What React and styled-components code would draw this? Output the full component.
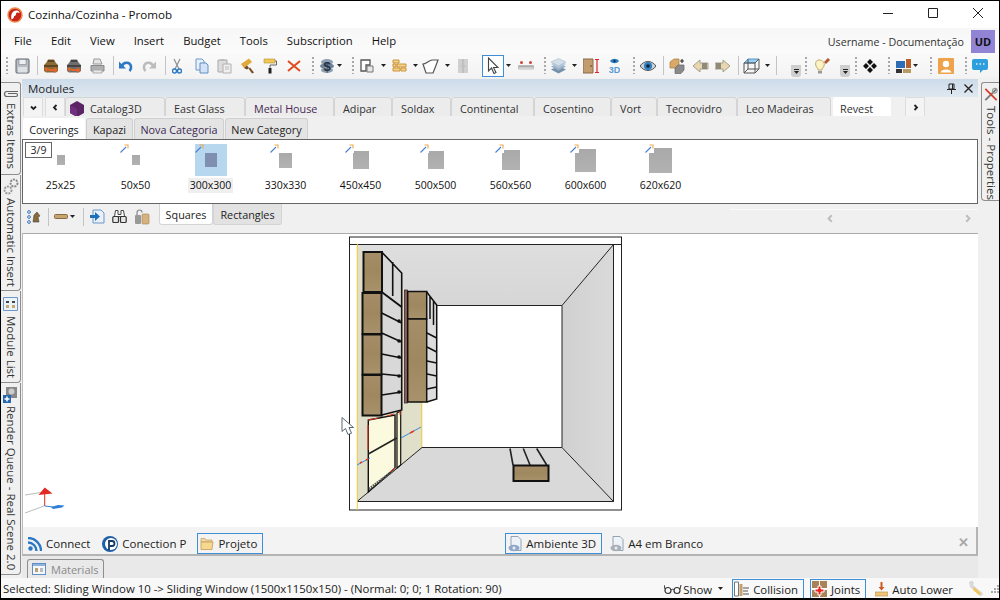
import styled, { createGlobalStyle } from "styled-components";

const GlobalStyle = createGlobalStyle`
  html, body {
    margin: 0;
    padding: 0;
    overflow: hidden;
  }
  body {
    font-family: "Open Sans", "Liberation Sans", sans-serif;
    font-size: 11.5px;
    color: #222;
  }
`;

const Svg = ({ w = 16, h = 16, children }) => (
  <svg width={w} height={h} viewBox={`0 0 ${w} ${h}`}>
    {children}
  </svg>
);

/* ---- toolbar icons ---- */
const SaveIcon = () => (
  <Svg w={15} h={16}>
    <rect x="1" y="1" width="13" height="14" rx="1" fill="#b9bec4" stroke="#5f666e" />
    <rect x="4" y="1.500" width="7" height="5" fill="#eef0f2" stroke="#7d848c" strokeWidth=".6" />
    <rect x="3" y="9" width="9" height="5.500" fill="#dfe2e5" />
  </Svg>
);
const CaseIcon = ({ body, dark, arrow }) => (
  <Svg>
    <path d="M3 5 5 1.500h6L13 5l2 2v6l-2 1.500H3L1 13V7z" fill={body} />
    <path d="M1 7h14v2H1zM5 2h6v2H5z" fill={dark} />
    <path d="M6 11h5V9l4 3-4 3v-2H6z" fill={arrow} />
    <path d="M1 11l3-2v1.500h2v2H4V14z" fill={arrow} />
  </Svg>
);
const BrownCase = () => <CaseIcon body="#8a6a38" dark="#5e4624" arrow="#e0652a" />;
const GreyCase = () => <CaseIcon body="#6e6e6e" dark="#444" arrow="#e0652a" />;
const PrinterIcon = () => (
  <Svg w={15} h={16}>
    <path d="M4 1h6l2 5H3z" fill="#e4e4e4" stroke="#999" />
    <path d="M1 7.500h13v5.500H1z" fill="#aeb0b2" stroke="#888" />
    <path d="M3 12h9v3H3z" fill="#e9e9e9" stroke="#aaa" />
  </Svg>
);
const UndoIcon = () => (
  <Svg>
    <path d="M4 8c1-4 8-5 9 .5.400 2-.5 3.500-1.500 4.500" fill="none" stroke="#2b78c4" strokeWidth="2.600" />
    <path d="M1 3.500v7h7z" fill="#2b78c4" />
  </Svg>
);
const RedoIcon = () => (
  <Svg>
    <path d="M12 8C11 4 4 3 3 8.500c-.4 2 .5 3.500 1.500 4.500" fill="none" stroke="#bcbcbc" strokeWidth="2.600" />
    <path d="M15 3.500v7H8z" fill="#bcbcbc" />
  </Svg>
);
const CutIcon = () => (
  <Svg w={10} h={16}>
    <path d="M2 1l5 10M8 1 3 11" stroke="#8a8f96" strokeWidth="1.200" fill="none" />
    <circle cx="2.500" cy="13" r="2" fill="none" stroke="#2b78c4" strokeWidth="1.400" />
    <circle cx="7.500" cy="13" r="2" fill="none" stroke="#2b78c4" strokeWidth="1.400" />
  </Svg>
);
const CopyIcon = () => (
  <Svg w={14} h={16}>
    <path d="M1 1h6l2 2v9H1z" fill="#e8f0fa" stroke="#6d97c8" />
    <path d="M5 5h6l2 2v8H5z" fill="#d3e3f5" stroke="#5f8fc6" />
  </Svg>
);
const PasteIcon = () => (
  <Svg w={15} h={16}>
    <path d="M1 2h9v12H1z" fill="#dcdcdc" stroke="#aaa" />
    <path d="M3.500 1h4v2h-4z" fill="#bbb" />
    <path d="M6 6h8v9H6z" fill="#efefef" stroke="#b0b0b0" />
    <path d="M8 9h4M8 11h4" stroke="#bbb" />
  </Svg>
);
const BrushIcon = () => (
  <Svg w={14} h={16}>
    <path d="M0 6 8 .5 11 4 3 10z" fill="#e0a93a" />
    <path d="M3 10l3-2.500 2 2.500L6 11.500z" fill="#6e4a24" />
    <path d="M7.500 10.500 9 9.500 13 14.500 11 15.500z" fill="#7b4a20" />
  </Svg>
);
const RollerIcon = () => (
  <Svg w={14} h={16}>
    <path d="M1 1h11v4H1z" fill="#f0c750" stroke="#b59238" strokeWidth=".6" />
    <path d="M12 3h1.500v4H7v3" fill="none" stroke="#666" />
    <path d="M5.500 10h3v5.500h-3z" fill="#222" />
  </Svg>
);
const DeleteIcon = () => (
  <Svg w={14} h={16}>
    <path d="M1 3l12 10M13 3 1 13" stroke="#dd4b1e" strokeWidth="2" />
  </Svg>
);
const BudgetIcon = () => (
  <Svg>
    <ellipse cx="8" cy="4" rx="6" ry="3" fill="#8da0b4" />
    <ellipse cx="8" cy="8" rx="7" ry="3" fill="#6c8299" />
    <ellipse cx="8" cy="12" rx="6" ry="3" fill="#8da0b4" />
    <text x="8" y="13" textAnchor="middle" fontSize="13" fontWeight="700" fill="#27323e" fontFamily="Liberation Sans">$</text>
  </Svg>
);
const PlanIcon = () => (
  <Svg w={14} h={16}>
    <path d="M1 2h9v5H6v6H1z" fill="#fff" stroke="#555" strokeWidth="1.300" />
    <path d="M7 8h6v6H7z" fill="#e8e8e8" stroke="#777" />
  </Svg>
);
const BrickIcon = () => (
  <Svg w={15} h={16}>
    <g fill="#f2d58c" stroke="#c98a2c" strokeWidth=".9">
      <path d="M1 2h6v3H1zM5 6h9v3H5zM1 6h3v3H1zM1 10h7v3H1zM9 10h5v3H9z" />
    </g>
  </Svg>
);
const ShapeIcon = () => (
  <Svg w={17} h={16}>
    <path d="M1 6c3 0 5-3 9-4h6l-3 8-2 5H4z" fill="#fff" stroke="#555" strokeWidth="1.200" />
  </Svg>
);
const DoorGrey = () => (
  <Svg w={10} h={16}>
    <path d="M0 1h10v14H0z" fill="#d0d0d0" />
    <path d="M3 8h1M6 8h1M5 1v14" stroke="#b0b0b0" />
  </Svg>
);
const PointerIcon = () => (
  <Svg w={12} h={18}>
    <path d="M1.500 1v13l3-3 2.500 5.500 2-1-2.500-5H11z" fill="#fff" stroke="#444" strokeWidth="1.100" />
  </Svg>
);
const RulerIcon = () => (
  <Svg>
    <circle cx="3.500" cy="4.500" r="1.500" fill="#c9473a" />
    <circle cx="12.500" cy="4.500" r="1.500" fill="#c9473a" />
    <path d="M.5 7.500h15V11H.5z" fill="#eee" stroke="#bbb" />
    <path d="M2 8v1.500M4 8v1.500M6 8v1.500M8 8v1.500M10 8v1.500M12 8v1.500M14 8v1.500" stroke="#666" />
  </Svg>
);
const LayersIcon = () => (
  <Svg w={15} h={16}>
    <path d="M7.500 8 15 11.500 7.500 15.500 0 11.500z" fill="#7690ac" />
    <path d="M7.500 5 15 8.500 7.500 12.500 0 8.500z" fill="#9ab0c6" />
    <path d="M7.500 2.500 15 6 7.500 10 0 6z" fill="#b7c9da" />
    <path d="M7.500 .5 15 4 7.500 8 0 4z" fill="#d3dfe9" stroke="#9ab0c6" strokeWidth=".5" />
  </Svg>
);
const DoorSizeIcon = () => (
  <Svg>
    <path d="M0 1h10v14H0z" fill="#c29c6e" stroke="#8a6b44" />
    <path d="M8 7v2" stroke="#5b4526" />
    <path d="M14 2v12M12 1.500h4M12 14.500h4" stroke="#e0252a" strokeWidth="1.200" />
  </Svg>
);
const View3dIcon = () => (
  <Svg w={11} h={16}>
    <path d="M1 3c2-3 7-3 9 0-2 3-7 3-9 0z" fill="#2f7fc0" />
    <circle cx="5.500" cy="3" r="1.200" fill="#19344f" />
    <text x="5.500" y="14.500" textAnchor="middle" fontSize="9" fontWeight="700" fill="#5a9ad4" fontFamily="Liberation Sans">3D</text>
  </Svg>
);
const EyeIcon = () => (
  <Svg>
    <path d="M0 8c4-6 12-6 16 0-4 6-12 6-16 0z" fill="#c8d0d8" stroke="#555" />
    <circle cx="8" cy="8" r="4" fill="#2f7fc0" />
    <circle cx="8" cy="8" r="1.800" fill="#123" />
  </Svg>
);
const BoxesIcon = () => (
  <Svg>
    <path d="M1 4l4-3h5v6l-4 3H1z" fill="#d9a969" stroke="#a97a3a" strokeWidth=".7" />
    <path d="M6 10l3-3h6v5l-3 3.500H6z" fill="#8a8a8a" stroke="#666" strokeWidth=".7" />
    <path d="M13 1v4M11 3h4" stroke="#333" strokeWidth="1.200" />
  </Svg>
);
const ArrowLeftIcon = () => (
  <Svg w={17} h={16}>
    <path d="M1 8l7-6v3h8v6H8v3z" fill="#e8d6ae" stroke="#a6a08f" />
    <path d="M10 5h5v6h-5z" fill="#8f8a7a" />
  </Svg>
);
const ArrowRightIcon = () => (
  <Svg>
    <path d="M15 8 8 2v3H0v6h8v3z" fill="#e8d6ae" stroke="#a6a08f" />
    <path d="M1 5h5v6H1z" fill="#8f8a7a" />
  </Svg>
);
const CubeIcon = () => (
  <Svg w={17} h={16}>
    <path d="M5 1h11L12 5H1z" fill="#9cd0f0" stroke="#3a7fb8" strokeWidth=".8" />
    <path d="M1 5h11v10H1zM12 5l4-4v10l-4 4M1 15l4-4h11M5 1v10" fill="none" stroke="#555" strokeWidth="1" />
  </Svg>
);
const BulbIcon = () => (
  <Svg w={17} h={18}>
    <path d="M6 3c4 0 6 3 5 6-.6 1.500-2 2-2 4H5c0-2-1.400-2.500-2-4C2 6 3 3 6 3z" fill="#fdf2c4" stroke="#bda868" />
    <path d="M5 14h4v2.500H5z" fill="#999" />
    <path d="M11 5l4-4 2 2-4 4z" fill="#b4552a" />
  </Svg>
);
const DiamondsIcon = () => (
  <Svg w={14} h={14}>
    <path d="M7 0l3 3-3 3-3-3zM3 4l3 3-3 3-3-3zM11 4l3 3-3 3-3-3zM7 8l3 3-3 3-3-3z" fill="#111" />
  </Svg>
);
const PanelIcon = () => (
  <Svg w={15} h={16}>
    <path d="M0 3h9v7H0z" fill="#2d6db5" />
    <path d="M10 1h5v9h-5z" fill="#b9602a" />
    <path d="M0 11h6v4H0z" fill="#333" />
    <path d="M7 11h8v4H7z" fill="#b99a62" />
  </Svg>
);
const AvatarIcon = () => (
  <Svg>
    <rect width="16" height="16" rx="1" fill="#eea24a" />
    <circle cx="8" cy="6" r="3.200" fill="#fff" />
    <path d="M2.500 14.500c.5-4 10.500-4 11 0z" fill="#fff" />
  </Svg>
);
const ChatIcon = () => (
  <Svg>
    <path d="M2 1h12a2 2 0 0 1 2 2v7a2 2 0 0 1-2 2h-3l-3 3v-3H2a2 2 0 0 1-2-2V3a2 2 0 0 1 2-2z" fill="#2e9fdc" />
    <path d="M4 6h1.500M7.500 6H9M11 6h1.500" stroke="#e2f3fc" strokeWidth="1.400" />
  </Svg>
);

/* ---- other small drawings ---- */
const PromobLogo = () => (
  <Svg>
    <circle cx="8" cy="8" r="7" fill="#c9241c" stroke="#ee8a4a" strokeWidth="1.400" />
    <path d="M4.500 12.500C3.500 8 5 3.500 9.500 3.500c2 0 3 1 3 2.500-2-1-3.500-.5-3.500 1 0 1.500-1 2-2 2 .5 1-.5 2.500-2.500 3.500z" fill="#fff" />
  </Svg>
);
const HexIcon = () => (
  <Svg w={14} h={16}>
    <path d="M7 0l7 4v8l-7 4-7-4V4z" fill="#5a2465" />
    <path d="M7 8v8l-7-4V4z" fill="#702f7e" />
  </Svg>
);
const WandIcon = () => (
  <svg width="9" height="9" viewBox="0 0 9 9">
    <path d="M.5 8.500 6 3" stroke="#4b7fd2" strokeWidth="1.100" />
    <path d="M4.500 1H8v3.500" fill="none" stroke="#eda948" strokeWidth="1.100" />
  </svg>
);
const PaperclipIcon = () => (
  <svg width="16" height="12" viewBox="0 0 16 12">
    <path d="M15 3.500H4a2.500 2.500 0 0 0 0 5h9a1.500 1.500 0 0 0 0-3H5" fill="none" stroke="#666" strokeWidth="1.200" />
  </svg>
);
const GearsIcon = () => (
  <svg width="16" height="17" viewBox="0 0 16 17">
    <circle cx="5" cy="12" r="3.500" fill="none" stroke="#999" strokeWidth="2" strokeDasharray="2 1" />
    <circle cx="11" cy="5" r="3.500" fill="none" stroke="#888" strokeWidth="2" strokeDasharray="2 1" />
  </svg>
);
const ListIcon = () => (
  <svg width="15" height="14" viewBox="0 0 15 14">
    <path d="M.5.500h14v13H.5z" fill="#eaf2fa" stroke="#6d97c8" />
    <path d="M3 4h3v2H3zM9 4h3v2H9z" fill="#444" />
    <path d="M3 8h3v3H3zM9 8h3v3H9z" fill="#c8a66e" />
  </svg>
);
const RenderIcon = () => (
  <svg width="15" height="17" viewBox="0 0 15 17">
    <path d="M3 0h11v11H3z" fill="#888" />
    <circle cx="8.500" cy="4.500" r="3" fill="#ccc" />
    <path d="M0 8h8v8H0z" fill="#2468b0" />
    <path d="M4 9.500v5M1.500 12h5" stroke="#fff" strokeWidth="1.500" />
  </svg>
);
const ToolsIcon = () => (
  <svg width="16" height="16" viewBox="0 0 16 16">
    <path d="M14 2 2 14" stroke="#777" strokeWidth="2" />
    <path d="M2 2l12 12" stroke="#d0402c" strokeWidth="2" />
    <circle cx="12" cy="4" r="2.500" fill="none" stroke="#999" strokeWidth="1.200" />
  </svg>
);
const NavUp = () => (
  <svg width="15" height="15" viewBox="0 0 15 15">
    <circle cx="2" cy="3" r="1.400" fill="none" stroke="#3a78c0" />
    <circle cx="2" cy="8" r="1.400" fill="none" stroke="#3a78c0" />
    <circle cx="2" cy="13" r="1.400" fill="none" stroke="#3a78c0" />
    <path d="M6 13l1-7 3-3 3 4-2 1 1 5z" fill="#8a6a38" stroke="#444" strokeWidth=".6" />
  </svg>
);
const PlankIcon = () => (
  <svg width="14" height="5" viewBox="0 0 14 5">
    <rect x=".5" y=".5" width="13" height="4" rx="1" fill="#c8a56e" stroke="#8a6b44" />
  </svg>
);
const DocArrowIcon = () => (
  <svg width="15" height="15" viewBox="0 0 15 15">
    <path d="M3 1h8l3 3v10H3z" fill="#e8f0fa" stroke="#6d97c8" />
    <path d="M0 6h5V3l5 4.500L5 12V9H0z" fill="#1e6fb8" />
  </svg>
);
const BinocularsIcon = () => (
  <svg width="15" height="15" viewBox="0 0 15 15">
    <path d="M3.500 1.500h2.500v4H9v-4h2.500l1 6h-5.500h-1H2.500z" fill="#fff" stroke="#444" />
    <rect x=".8" y="7.500" width="5.700" height="6" rx="1" fill="#e6e6e6" stroke="#333" strokeWidth="1.200" />
    <rect x="8.500" y="7.500" width="5.700" height="6" rx="1" fill="#e6e6e6" stroke="#333" strokeWidth="1.200" />
  </svg>
);
const LockIcon = () => (
  <svg width="16" height="16" viewBox="0 0 16 16">
    <path d="M3 6V3.500a2.500 2.500 0 0 1 5 0" fill="none" stroke="#888" strokeWidth="1.200" />
    <rect x="1" y="6" width="6" height="9" rx="1" fill="#999" />
    <rect x="8" y="5" width="7" height="10" rx="1" fill="#d8b27e" stroke="#a08258" strokeWidth=".6" />
  </svg>
);
const RssIcon = () => (
  <svg width="14" height="14" viewBox="0 0 14 14">
    <circle cx="2.500" cy="11.500" r="2.200" fill="#2b78c4" />
    <path d="M0 5.500a8.500 8.500 0 0 1 8.500 8.500M0 1a13 13 0 0 1 13 13" fill="none" stroke="#2b78c4" strokeWidth="2.400" />
  </svg>
);
const ConnectionIcon = () => (
  <svg width="16" height="16" viewBox="0 0 16 16">
    <circle cx="8" cy="8" r="8" fill="#1e5fa8" />
    <circle cx="9" cy="8" r="6" fill="#fff" />
    <path d="M7 14V5h3a2.500 2.500 0 0 1 0 5H8" fill="none" stroke="#14385f" strokeWidth="1.800" />
  </svg>
);
const FolderIcon = () => (
  <svg width="14" height="13" viewBox="0 0 14 13">
    <path d="M1 1.500h4l1 1.500h6v2H1z" fill="#f3d9a8" stroke="#c49a5a" strokeWidth=".7" />
    <path d="M1 5h12l-1 7.500H1z" fill="#f6d98f" stroke="#c49a5a" strokeWidth=".8" />
  </svg>
);
const PageIcon = ({ tint }) => (
  <svg width="14" height="16" viewBox="0 0 14 16">
    <path d="M3 .5h7L13 3.500v11H3z" fill="#eef3f8" stroke="#7c8ea2" strokeWidth=".8" />
    <ellipse cx="6" cy="12" rx="5.500" ry="3.300" fill={tint} />
    <circle cx="6" cy="12" r="1.500" fill="#eee" />
  </svg>
);
const MaterialsIcon = () => (
  <svg width="14" height="12" viewBox="0 0 14 12">
    <rect x=".5" y=".5" width="13" height="11" fill="#f5f8fb" stroke="#5f8fc6" />
    <path d="M1 1h12v2H1z" fill="#8fb3dc" />
    <path d="M3 5h3v4H3z" fill="#b9a06e" />
    <path d="M8 5h3v4H8z" fill="#bbb" />
  </svg>
);
const GlassesIcon = () => (
  <svg width="18" height="12" viewBox="0 0 18 12">
    <circle cx="4" cy="7.500" r="3" fill="none" stroke="#333" strokeWidth="1.200" />
    <circle cx="13" cy="7.500" r="3" fill="none" stroke="#333" strokeWidth="1.200" />
    <path d="M7 7c1-1 2-1 3 0M1 6 0 2M16 6l1-4" fill="none" stroke="#333" />
  </svg>
);
const CollisionIcon = () => (
  <svg width="15" height="16" viewBox="0 0 15 16">
    <path d="M.5 1h4v14h-4z" fill="#fff" stroke="#777" />
    <path d="M5.500 3h3v12h-3z" fill="#c59f6c" />
    <path d="M9 7h6M9 10h5M9 13h6" stroke="#555" />
  </svg>
);
const JointsIcon = () => (
  <svg width="15" height="16" viewBox="0 0 15 16">
    <path d="M0 0h7v7H0zM8 0h7v7H8zM0 9h7v7H0zM8 9h7v7H8z" fill="#a98358" />
    <path d="M6 5h3v3h3v3H9v3H6v-3H3V8h3z" fill="#e8261e" stroke="#fff" />
  </svg>
);
const AutoLowerIcon = () => (
  <svg width="13" height="16" viewBox="0 0 13 16">
    <path d="M6.500 1v6" stroke="#d05a20" strokeWidth="2" />
    <path d="M3.500 6h6l-3 3.500z" fill="#d05a20" />
    <path d="M0 11h13v4H0z" fill="#eec27a" stroke="#b48a44" strokeWidth=".6" />
  </svg>
);
const WrenchIcon = () => (
  <svg width="16" height="17" viewBox="0 0 16 17">
    <path d="M1 2l3-1.500L6 3l-1 2 7 6 2 1 1 3-3 1-4-4L2 7z" fill="#d8d8d8" />
    <path d="M6 7l7 6-1.500 2.500L5 10z" fill="#eec65a" />
  </svg>
);
const GripCorner = () => (
  <svg width="8" height="8" viewBox="0 0 8 8">
    <path d="M6 0h2v2H6zM3 3h2v2H3zM6 3h2v2H6zM0 6h2v2H0zM3 6h2v2H3zM6 6h2v2H6z" fill="#aaa" />
  </svg>
);
const Chevron = ({ dir, color = "#222", size = 7, weight = 1.800 }) => {
  const d = { down: "M1 2.500 3.500 5 6 2.500", left: "M4.500 1 2 3.500 4.500 6", right: "M2.500 1 5 3.500 2.500 6" };
  return (
    <svg width={size} height={size} viewBox="0 0 7 7">
      <path d={d[dir]} fill="none" stroke={color} strokeWidth={weight} />
    </svg>
  );
};

/* ---- toolbar data: icon, left gap ---- */
const TOOLS = [
  ["grip", 5], [SaveIcon, 7], ["sep", 7], [BrownCase, 5], [GreyCase, 7], [PrinterIcon, 8], ["sep", 8],
  [UndoIcon, 4], [RedoIcon, 7], ["sep", 8], [CutIcon, 6], [CopyIcon, 13], [PasteIcon, 8], [BrushIcon, 9],
  [RollerIcon, 8], [DeleteIcon, 10], ["grip", 11], [BudgetIcon, 5], ["caret", 2], ["grip", 10], [PlanIcon, 6],
  ["caret", 7], [BrickIcon, 6], ["caret", 6], [ShapeIcon, 4], ["caret", 6], [DoorGrey, 8], ["pointer", 14],
  ["caret", 2], [RulerIcon, 7], ["grip", 10], [LayersIcon, 5], ["caret", 6], [DoorSizeIcon, 6], [View3dIcon, 10],
  ["grip", 13], [EyeIcon, 5], ["sep", 7], [BoxesIcon, 5], [ArrowLeftIcon, 7], [ArrowRightIcon, 6], ["sep", 7],
  [CubeIcon, 4], ["caret", 5], ["sep", 6], ["more", 14], ["grip", 4], [BulbIcon, 6], ["more", 10], ["grip", 5],
  [DiamondsIcon, 6], ["grip", 11], [PanelIcon, 6], ["caret", 2], ["grip", 12], [AvatarIcon, 6], ["grip", 11],
  [ChatIcon, 5],
];

const MENUS = ["File", "Edit", "View", "Insert", "Budget", "Tools", "Subscription", "Help"];
const CATALOGS = [
  ["East Glass", 80], ["Metal House", 89], ["Adipar", 58], ["Soldax", 59], ["Continental", 83],
  ["Cosentino", 77], ["Vort", 46], ["Tecnovidro", 80], ["Leo Madeiras", 94],
];
const CATEGORIES = [
  ["Coverings", 62], ["Kapazi", 47], ["Nova Categoria", 90], ["New Category", 83],
];
const THUMBS = [
  ["25x25", 8], ["50x50", 8], ["300x300", 12], ["330x330", 13], ["450x450", 16],
  ["500x500", 16], ["560x560", 18], ["600x600", 21], ["620x620", 23],
];

const Caret = () => (
  <svg width="5" height="3" viewBox="0 0 5 3">
    <path d="M0 0h5L2.500 3z" fill="#222" />
  </svg>
);

const Frame = styled.div`
  box-sizing: border-box;
  width: 1000px;
  height: 600px;
  display: flex;
  flex-direction: column;
  border: 1px solid #000;
  border-bottom-width: 2px;
  background: #f0f0f0;
  overflow: hidden;
`;

const TitleBar = styled.div`
  height: 27px;
  flex: none;
  display: flex;
  align-items: center;
  padding-left: 6px;
  background: #fff;
`;
const TitleText = styled.span`
  margin-left: 5px;
  font-size: 11.6px;
  color: #111;
`;
const WindowControls = styled.div`
  margin-left: auto;
  display: flex;
  align-items: center;
  gap: 35px;
  padding-right: 16px;
  margin-top: -3px;
`;

const MenuBar = styled.div`
  height: 25px;
  flex: none;
  display: flex;
  align-items: center;
  padding-left: 13px;
  gap: 19px;
  background: linear-gradient(#f7f7f7, #fbfbfb);
`;
const MenuItem = styled.span`
  font-size: 11.3px;
  color: #111;
`;
const UserBlock = styled.div`
  margin-left: auto;
  display: flex;
  align-items: center;
  gap: 7px;
  padding-right: 4px;
  color: #333;
  font-size: 10.7px;
`;
const UserName = styled.span`
  padding-top: 3px;
`;
const UserBadge = styled.div`
  width: 24px;
  height: 24px;
  margin-top: 2px;
  display: flex;
  align-items: center;
  justify-content: center;
  background: #9184d4;
  color: #111;
  font-weight: 700;
  font-size: 11px;
`;

const ToolRow = styled.div`
  height: 25px;
  flex: none;
  display: flex;
  align-items: center;
  background: linear-gradient(#fafafa, #f3f3f3);
`;
const ToolSlot = styled.div`
  flex: none;
  display: flex;
  align-items: center;
  margin-left: ${(p) => p.$gap}px;
`;
const Grip = styled.div`
  width: 2px;
  height: 17px;
  margin-left: ${(p) => p.$gap}px;
  flex: none;
  background: repeating-linear-gradient(#a8a8a8 0 2px, transparent 2px 4px);
`;
const ToolSep = styled.div`
  width: 1px;
  height: 19px;
  margin-left: ${(p) => p.$gap}px;
  flex: none;
  background: #c4c4c4;
`;
const PointerBox = styled.div`
  box-sizing: border-box;
  width: 22px;
  height: 22px;
  margin-left: ${(p) => p.$gap}px;
  flex: none;
  display: flex;
  align-items: center;
  justify-content: center;
  border: 1px solid #3f8ed6;
  background: #fdfdfd;
`;
const MoreButton = styled.div`
  width: 10px;
  height: 12px;
  margin-left: ${(p) => p.$gap}px;
  margin-top: 11px;
  flex: none;
  display: flex;
  flex-direction: column;
  align-items: center;
  justify-content: center;
  gap: 1px;
  background: #cfcfcf;
  border-radius: 0 0 3px 3px;
  &::before {
    content: "";
    width: 5px;
    height: 1px;
    background: #222;
  }
`;

const Middle = styled.div`
  flex: 1;
  min-height: 0;
  display: flex;
`;

const Rail = styled.div`
  width: ${(p) => (p.$right ? 21 : 20)}px;
  flex: none;
  display: flex;
  flex-direction: column;
  padding-top: 4px;
  box-sizing: border-box;
`;
const RailTab = styled.div`
  box-sizing: border-box;
  height: ${(p) => p.$h}px;
  flex: none;
  display: flex;
  flex-direction: column;
  align-items: center;
  padding-top: ${(p) => p.$pad}px;
  gap: ${(p) => p.$gap}px;
  margin-left: ${(p) => (p.$right ? 3 : 0)}px;
  background: #f0f0f0;
  border-bottom: 1px solid #8e8e8e;
  border-right: ${(p) => (p.$right ? "none" : "1px solid #8e8e8e")};
  border-left: ${(p) => (p.$right ? "1px solid #8e8e8e" : "none")};
  border-radius: ${(p) => (p.$right ? "3px 0 0 4px" : "0 0 4px 0")};
  &:first-child {
    border-top: 1px solid #8e8e8e;
    border-top-right-radius: ${(p) => (p.$right ? 0 : 3)}px;
  }
`;
const RailLabel = styled.span`
  writing-mode: vertical-rl;
  font-size: 11.5px;
  line-height: 18px;
  color: #333;
  white-space: nowrap;
`;

const Center = styled.div`
  flex: 1;
  min-width: 0;
  display: flex;
  flex-direction: column;
  margin-left: 1px;
`;
const ModulesHeader = styled.div`
  height: 18px;
  flex: none;
  margin-top: 1px;
  display: flex;
  align-items: center;
  padding: 0 5px 0 6px;
  background: linear-gradient(#cddbe9, #dfe8f1);
  font-size: 11.5px;
  color: #222;
`;
const HeaderActions = styled.div`
  margin-left: auto;
  display: flex;
  align-items: center;
  gap: 8px;
`;

const CatalogRow = styled.div`
  height: 19px;
  flex: none;
  display: flex;
  align-items: stretch;
  padding-left: 1px;
  overflow: hidden;
`;
const ScrollButton = styled.div`
  box-sizing: border-box;
  width: 20px;
  margin-right: ${(p) => p.$gap || 0}px;
  margin-left: ${(p) => p.$left || 0}px;
  flex: none;
  display: flex;
  align-items: center;
  justify-content: center;
  background: #f4f4f4;
  border: 1px solid #dcdcdc;
  border-bottom: none;
`;
const CatalogTab = styled.div`
  box-sizing: border-box;
  width: ${(p) => p.$w}px;
  margin-left: ${(p) => (p.$active ? 2 : 0)}px;
  flex: none;
  display: flex;
  align-items: center;
  gap: 6px;
  padding-left: ${(p) => p.$pad || 8}px;
  padding-top: 3px;
  background: ${(p) => (p.$active ? "#fff" : "#ececec")};
  border: 1px solid ${(p) => (p.$active ? "#fff" : "#d4d4d4")};
  border-bottom: none;
  border-radius: 3px 3px 0 0;
  font-size: 10.8px;
  color: ${(p) => p.$color || "#333"};
  white-space: nowrap;
`;

const CategoryRow = styled.div`
  height: 21px;
  flex: none;
  margin-top: 2px;
  display: flex;
  align-items: stretch;
  padding-left: 1px;
  gap: 1px;
`;
const CategoryTab = styled.div`
  box-sizing: border-box;
  width: ${(p) => p.$w}px;
  display: flex;
  align-items: center;
  justify-content: center;
  background: ${(p) => (p.$active ? "#fff" : "#e4e4e4")};
  border: 1px solid ${(p) => (p.$active ? "#fff" : "#d0d0d0")};
  border-bottom: none;
  border-radius: 3px 3px 0 0;
  font-size: 10.8px;
  color: ${(p) => p.$color || "#222"};
`;

const ThumbPanel = styled.div`
  box-sizing: border-box;
  height: 65px;
  flex: none;
  position: relative;
  display: flex;
  padding-top: 4px;
  background: #fff;
  border: 1px solid #666;
`;
const PageBadge = styled.div`
  position: absolute;
  left: 2px;
  top: 2px;
  box-sizing: border-box;
  width: 27px;
  height: 16px;
  display: flex;
  align-items: center;
  justify-content: center;
  background: #fff;
  border: 1px solid #666;
  font-size: 10.5px;
`;
const Thumb = styled.div`
  width: 75px;
  flex: none;
  display: flex;
  flex-direction: column;
  align-items: center;
`;
const ThumbBox = styled.div`
  position: relative;
  width: 32px;
  height: 32px;
  display: flex;
  align-items: center;
  justify-content: center;
  background: ${(p) => (p.$selected ? "#b6d7ee" : "transparent")};
`;
const ThumbSwatch = styled.div`
  width: ${(p) => p.$size}px;
  height: ${(p) => p.$size + 2}px;
  background: ${(p) => (p.$selected ? "#7f8fb0" : "linear-gradient(#a9a9a9, #b2b2b2)")};
`;
const WandBadge = styled.div`
  position: absolute;
  left: 0;
  top: 0;
  width: 9px;
  height: 9px;
  display: flex;
  background: ${(p) => (p.$selected ? "transparent" : "#fff")};
`;
const ThumbLabel = styled.span`
  margin-top: 2px;
  padding: 0 2px;
  height: 15px;
  line-height: 15px;
  font-size: 10.5px;
  color: #111;
  background: ${(p) => (p.$selected ? "#efefef" : "transparent")};
`;

const SubToolbar = styled.div`
  height: 29px;
  flex: none;
  display: flex;
  align-items: flex-start;
  padding-left: 5px;
`;
const SubTool = styled.div`
  margin-left: ${(p) => p.$gap || 0}px;
  margin-top: 4px;
  flex: none;
  height: 17px;
  display: flex;
  align-items: center;
  gap: 2px;
`;
const SubSep = styled.div`
  width: 1px;
  height: 18px;
  margin-top: 4px;
  margin-left: ${(p) => p.$gap}px;
  flex: none;
  background: #c4c4c4;
`;
const ShapeTab = styled.div`
  box-sizing: border-box;
  width: ${(p) => p.$w}px;
  height: 21px;
  margin-left: ${(p) => p.$gap || 0}px;
  flex: none;
  display: flex;
  align-items: center;
  justify-content: center;
  background: ${(p) => (p.$active ? "#fff" : "#e2e2e2")};
  border: 1px solid #d4d4d4;
  border-top: none;
  border-radius: 0 0 3px 3px;
  font-size: 10.8px;
`;
const PageScroller = styled.div`
  margin-left: auto;
  margin-top: 5px;
  width: 248px;
  height: 15px;
  box-sizing: border-box;
  flex: none;
  display: flex;
  align-items: center;
  justify-content: space-between;
  padding: 2px 6px 0 96px;
  border-top: 1px solid #fafafa;
`;

const Viewport = styled.div`
  height: 294px;
  flex: none;
  box-sizing: border-box;
  background: #fff;
  border-top: 1px solid #ababab;
  border-left: 1px solid #bcbcbc;
`;

const BottomBar = styled.div`
  height: 29px;
  flex: none;
  box-sizing: border-box;
  display: flex;
  align-items: flex-end;
  padding: 0 7px 0 4px;
  background: #f3f3f3;
  border-left: 1px solid #bcbcbc;
  border-right: 2px solid #b4b4b4;
  border-bottom: 2px solid #b4b4b4;
`;
const DocTab = styled.div`
  box-sizing: border-box;
  height: 21px;
  display: flex;
  align-items: center;
  gap: 4px;
  flex: none;
  padding: ${(p) => (p.$boxed ? "0 5px 0 2px" : "0")};
  margin-left: ${(p) => p.$gap || 0}px;
  border: 1px solid ${(p) => (p.$boxed ? "#3f8ed6" : "transparent")};
  font-size: 11.5px;
  color: #222;
`;
const CloseMark = styled.span`
  margin-left: auto;
  align-self: center;
  font-family: "Liberation Sans", sans-serif;
  font-size: 13px;
  font-weight: 700;
  color: #a8a8a8;
  padding-top: 4px;
`;

const MaterialsRow = styled.div`
  height: 22px;
  flex: none;
  display: flex;
  align-items: flex-end;
  padding-left: 5px;
  background: #e9e9e9;
`;
const MaterialsTab = styled.div`
  box-sizing: border-box;
  width: 77px;
  height: 19px;
  display: flex;
  align-items: center;
  gap: 5px;
  padding-left: 4px;
  border: 1px solid #8e8e8e;
  border-bottom: none;
  border-radius: 3px 3px 0 0;
  font-size: 11px;
  color: #8a8a8a;
`;

const StatusBar = styled.div`
  height: 20px;
  flex: none;
  display: flex;
  align-items: center;
  padding-left: 2px;
  padding-top: 1px;
  box-sizing: border-box;
  background: #f8f8f8;
  font-size: 11.4px;
  color: #222;
  white-space: nowrap;
`;
const StatusItem = styled.div`
  box-sizing: border-box;
  height: 19px;
  flex: none;
  display: flex;
  align-items: center;
  gap: ${(p) => (p.$tight ? 1 : 4)}px;
  padding: 0 ${(p) => (p.$boxed ? 5 : 1)}px 0 ${(p) => (p.$boxed ? 1 : 0)}px;
  margin-left: ${(p) => p.$gap || 0}px;
  border: 1px solid ${(p) => (p.$boxed ? "#3f8ed6" : "transparent")};
  border-bottom: none;
`;
const StatusText = styled.span`
  flex: 1;
`;

const RoomDrawing = () => (
  <svg width="955" height="293" viewBox="23 234 955 293" style={{ display: "block" }}>
    <defs>
      <linearGradient id="wood" x1="0" y1="0" x2="0" y2="1">
        <stop offset="0" stopColor="#a58e68" />
        <stop offset=".5" stopColor="#9f885f" />
        <stop offset="1" stopColor="#a8926c" />
      </linearGradient>
      <linearGradient id="ceil" x1="0" y1="0" x2="0" y2="1">
        <stop offset="0" stopColor="#dedede" />
        <stop offset="1" stopColor="#d6d6d6" />
      </linearGradient>
      <linearGradient id="rightWall" x1="0" y1="0" x2="1" y2="0">
        <stop offset="0" stopColor="#d0d0d0" />
        <stop offset="1" stopColor="#dadada" />
      </linearGradient>
    </defs>

    {/* room shell */}
    <rect x="349.500" y="237" width="272" height="273" fill="#fff" stroke="#222" />
    <path d="M357 244.500h256.500L562 306H422z" fill="url(#ceil)" />
    <path d="M613.500 244.500V502L562 447V306z" fill="url(#rightWall)" />
    <path d="M422 447h140l51.500 55H357z" fill="#d9d9d9" />
    <path d="M357 244.500 422 306v141l-65 55z" fill="#e0dfca" />
    <rect x="422" y="305.500" width="140" height="142" fill="#fff" />
    <path d="M349.500 244.500h272" stroke="#222" />
    <path d="M357 501.500h256.500V244.500" fill="none" stroke="#222" />
    <path d="M562 305.500H436M562 305.500V447.500H422M562 305.500 613.500 244.500M562 447.500 613.500 501.500M422 447.500 357 501.500" fill="none" stroke="#222" />
    <path d="M357.300 244 V510M421.800 400V447" stroke="#f0c93a" />

    {/* tall cabinets on the left */}
    <path d="M381.700 252 401.700 273V410L381.700 415z" fill="#d8d8d8" />
    <path d="M381.700 252 401.700 273V410L381.700 415M392.700 262V296" fill="none" stroke="#111" strokeWidth="1.600" />
    <g stroke="#111" strokeWidth="1.500">
      <path d="M381.700 292 401.700 307" strokeWidth="2" />
      <path d="M381.700 313 401.700 323M381.700 333 401.700 342M381.700 354 401.700 358M381.700 374 401.700 376M381.700 395 401.700 392" />
    </g>
    <g fill="#111">
      <circle cx="399" cy="321" r="1.800" />
      <circle cx="399" cy="341" r="1.800" />
      <circle cx="399" cy="357" r="1.800" />
      <circle cx="399" cy="376" r="1.800" />
      <circle cx="399" cy="392" r="1.800" />
    </g>
    <g fill="url(#wood)" stroke="#111" strokeWidth="2">
      <rect x="363.500" y="252" width="18.500" height="40" />
      <rect x="362.500" y="293" width="19" height="41" />
      <rect x="362.500" y="334.500" width="19" height="40" />
      <rect x="362.500" y="375" width="19" height="40.500" />
    </g>

    {/* cabinets against the back */}
    <path d="M426.700 292 436.700 305V399L426.700 402z" fill="#ddd" />
    <path d="M426.700 292 436.700 305V399L426.700 402M430 296V319M433.500 301V325" fill="none" stroke="#111" strokeWidth="1.500" />
    <g stroke="#111" strokeWidth="1.500">
      <path d="M427 333 436.700 338M427 347 436.700 352M427 361 436.700 363M427 374 436.700 376M427 389 436.700 387" />
    </g>
    <rect x="404.500" y="290" width="3" height="113" fill="#8d5b5b" stroke="#222" strokeWidth=".7" />
    <g fill="url(#wood)" stroke="#111" strokeWidth="1.500">
      <rect x="407.700" y="291.500" width="19" height="27.500" />
      <rect x="407.700" y="319" width="19" height="83" />
    </g>

    {/* sliding window */}
    <path d="M368.300 420 395 415V468L368.300 492z" fill="#fbfade" stroke="#111" strokeWidth="1.400" />
    <path d="M368.300 454 396.700 438" stroke="#222" strokeWidth="1.600" />
    <path d="M397 413 400.700 411V465L397 468z" fill="#f6f4d4" stroke="#111" strokeWidth="1.200" />
    <path d="M369 489 394 470" stroke="#555" strokeWidth="2.500" strokeDasharray="1.500 1" />
    <path d="M368 420 378 418M387 416 394 414M400 415V411M368 425V450M390 472 395 468" stroke="#e23a24" fill="none" />
    <path d="M357 465 370 458M401 438 421 427" stroke="#3c88d8" />
    <path d="M410 433 414 431M360 463 362 462M366 460 368 459" stroke="#e23a24" strokeWidth="1.500" />

    {/* low box on the floor */}
    <path d="M510 448.500 513 465M523.300 448.500 530 465M536.700 448.500 546.700 465" stroke="#222" strokeWidth="1.600" />
    <rect x="513.500" y="465.500" width="35" height="15.500" fill="url(#wood)" stroke="#111" strokeWidth="2" />

    {/* axes */}
    <path d="M25 495 44 492M25 513 44 506" stroke="#bbb" />
    <path d="M44.700 506V492" stroke="#e22a22" />
    <path d="M38.500 495 44.700 487.500 52.500 493.500z" fill="#e22a22" />
    <path d="M44.700 506 53 507" stroke="#2f7fd8" />
    <path d="M51 507 58 505 64.500 505.500 62 507.500 53 509z" fill="#2f7fd8" />

    {/* mouse cursor */}
    <path d="M342 417.500v14l3.500-3 2.500 6 3.500-1.300-2.500-5.700h4.500z" fill="#fff" stroke="#5a6676" strokeWidth="1" />
  </svg>
);

const App = () => {
  return (
    <>
      <GlobalStyle />
      <Frame>
        <TitleBar>
          <PromobLogo />
          <TitleText>Cozinha/Cozinha - Promob</TitleText>
          <WindowControls>
            <svg width="10" height="10" viewBox="0 0 10 10">
              <path d="M0 5.500h10" stroke="#222" />
            </svg>
            <svg width="10" height="10" viewBox="0 0 10 10">
              <path d="M.5.500h9v9h-9z" fill="none" stroke="#222" />
            </svg>
            <svg width="10" height="10" viewBox="0 0 10 10">
              <path d="M0 0l10 10M10 0 0 10" stroke="#222" />
            </svg>
          </WindowControls>
        </TitleBar>

        <MenuBar>
          {MENUS.map((m) => (
            <MenuItem key={m}>{m}</MenuItem>
          ))}
          <UserBlock>
            <UserName>Username - Documentação</UserName>
            <UserBadge>UD</UserBadge>
          </UserBlock>
        </MenuBar>

        <ToolRow>
          {TOOLS.map(([Item, gap], i) => {
            if (Item === "grip") return <Grip key={i} $gap={gap} />;
            if (Item === "sep") return <ToolSep key={i} $gap={gap} />;
            if (Item === "more") return <MoreButton key={i} $gap={gap}><Caret /></MoreButton>;
            if (Item === "pointer") return <PointerBox key={i} $gap={gap}><PointerIcon /></PointerBox>;
            if (Item === "caret") return <ToolSlot key={i} $gap={gap}><Caret /></ToolSlot>;
            return <ToolSlot key={i} $gap={gap}><Item /></ToolSlot>;
          })}
        </ToolRow>

        <Middle>
          <Rail>
            <RailTab $h={93} $pad={5} $gap={3}>
              <PaperclipIcon />
              <RailLabel>Extras Items</RailLabel>
            </RailTab>
            <RailTab $h={116} $pad={3} $gap={3}>
              <GearsIcon />
              <RailLabel>Automatic Insert</RailLabel>
            </RailTab>
            <RailTab $h={92} $pad={6} $gap={5}>
              <ListIcon />
              <RailLabel>Module List</RailLabel>
            </RailTab>
            <RailTab $h={192} $pad={4} $gap={2}>
              <RenderIcon />
              <RailLabel>Render Queue - Real Scene 2.0</RailLabel>
            </RailTab>
          </Rail>

          <Center>
            <ModulesHeader>
              Modules
              <HeaderActions>
                <svg width="9" height="11" viewBox="0 0 9 11">
                  <path d="M2 1h5v5H2zM0 6.500h9M4.500 7v4M5.500 1v5" fill="none" stroke="#222" />
                </svg>
                <svg width="9" height="9" viewBox="0 0 9 9">
                  <path d="M.5.500l8 8M8.500.500l-8 8" stroke="#222" strokeWidth="1.300" />
                </svg>
              </HeaderActions>
            </ModulesHeader>

            <CatalogRow>
              <ScrollButton $gap={2}>
                <Chevron dir="down" />
              </ScrollButton>
              <ScrollButton>
                <Chevron dir="left" />
              </ScrollButton>
              <CatalogTab $w={100} $pad={4}>
                <HexIcon />
                Catalog3D
              </CatalogTab>
              {CATALOGS.map(([name, w]) => (
                <CatalogTab key={name} $w={w} $color={name === "Metal House" ? "#4a2a55" : undefined}>
                  {name}
                </CatalogTab>
              ))}
              <CatalogTab $w={58} $active $pad={6}>Revest</CatalogTab>
              <ScrollButton $left={14}>
                <Chevron dir="right" />
              </ScrollButton>
            </CatalogRow>

            <CategoryRow>
              {CATEGORIES.map(([name, w], i) => (
                <CategoryTab key={name} $w={w} $active={i === 0} $color={i === 2 ? "#3a2a55" : undefined}>
                  {name}
                </CategoryTab>
              ))}
            </CategoryRow>

            <ThumbPanel>
              <PageBadge>3/9</PageBadge>
              {THUMBS.map(([label, size], i) => (
                <Thumb key={label}>
                  <ThumbBox $selected={i === 2}>
                    <ThumbSwatch $size={size} $selected={i === 2} />
                    {i > 0 && (
                      <WandBadge $selected={i === 2}>
                        <WandIcon />
                      </WandBadge>
                    )}
                  </ThumbBox>
                  <ThumbLabel $selected={i === 2}>{label}</ThumbLabel>
                </Thumb>
              ))}
            </ThumbPanel>

            <SubToolbar>
              <SubTool>
                <NavUp />
              </SubTool>
              <SubSep $gap={6} />
              <SubTool $gap={5}>
                <PlankIcon />
                <Caret />
              </SubTool>
              <SubSep $gap={8} />
              <SubTool $gap={6}>
                <DocArrowIcon />
              </SubTool>
              <SubTool $gap={7}>
                <BinocularsIcon />
              </SubTool>
              <SubTool $gap={7}>
                <LockIcon />
              </SubTool>
              <ShapeTab $active $gap={9} $w={54}>Squares</ShapeTab>
              <ShapeTab $w={69}>Rectangles</ShapeTab>
              <PageScroller>
                <Chevron dir="left" color="#bdbdbd" size={9} weight={1.500} />
                <Chevron dir="right" color="#bdbdbd" size={9} weight={1.500} />
              </PageScroller>
            </SubToolbar>

            <Viewport>
              <RoomDrawing />
            </Viewport>

            <BottomBar>
              <DocTab>
                <RssIcon />
                Connect
              </DocTab>
              <DocTab $gap={10}>
                <ConnectionIcon />
                Conection P
              </DocTab>
              <DocTab $boxed $gap={10}>
                <FolderIcon />
                Projeto
              </DocTab>
              <DocTab $boxed $gap={242}>
                <PageIcon tint="#8fa8c8" />
                Ambiente 3D
              </DocTab>
              <DocTab $gap={7}>
                <PageIcon tint="#a8b0b8" />
                A4 em Branco
              </DocTab>
              <CloseMark>✕</CloseMark>
            </BottomBar>

            <MaterialsRow>
              <MaterialsTab>
                <MaterialsIcon />
                Materials
              </MaterialsTab>
            </MaterialsRow>
          </Center>

          <Rail $right>
            <RailTab $right $h={119} $pad={4} $gap={4}>
              <ToolsIcon />
              <RailLabel>Tools - Properties</RailLabel>
            </RailTab>
          </Rail>
        </Middle>

        <StatusBar>
          <StatusText>
            Selected: Sliding Window 10 -&gt; Sliding Window (1500x1150x150) - (Normal: 0; 0; 1 Rotation: 90)
          </StatusText>
          <StatusItem $tight>
            <GlassesIcon />
            Show
          </StatusItem>
          <ToolSlot $gap={4}>
            <Caret />
          </ToolSlot>
          <StatusItem $boxed $gap={9}>
            <CollisionIcon />
            Collision
          </StatusItem>
          <StatusItem $boxed $gap={6}>
            <JointsIcon />
            Joints
          </StatusItem>
          <StatusItem $gap={8}>
            <AutoLowerIcon />
            Auto Lower
          </StatusItem>
          <ToolSlot $gap={13}>
            <WrenchIcon />
          </ToolSlot>
          <ToolSlot $gap={7}>
            <GripCorner />
          </ToolSlot>
        </StatusBar>
      </Frame>
    </>
  );
};

export default App;
